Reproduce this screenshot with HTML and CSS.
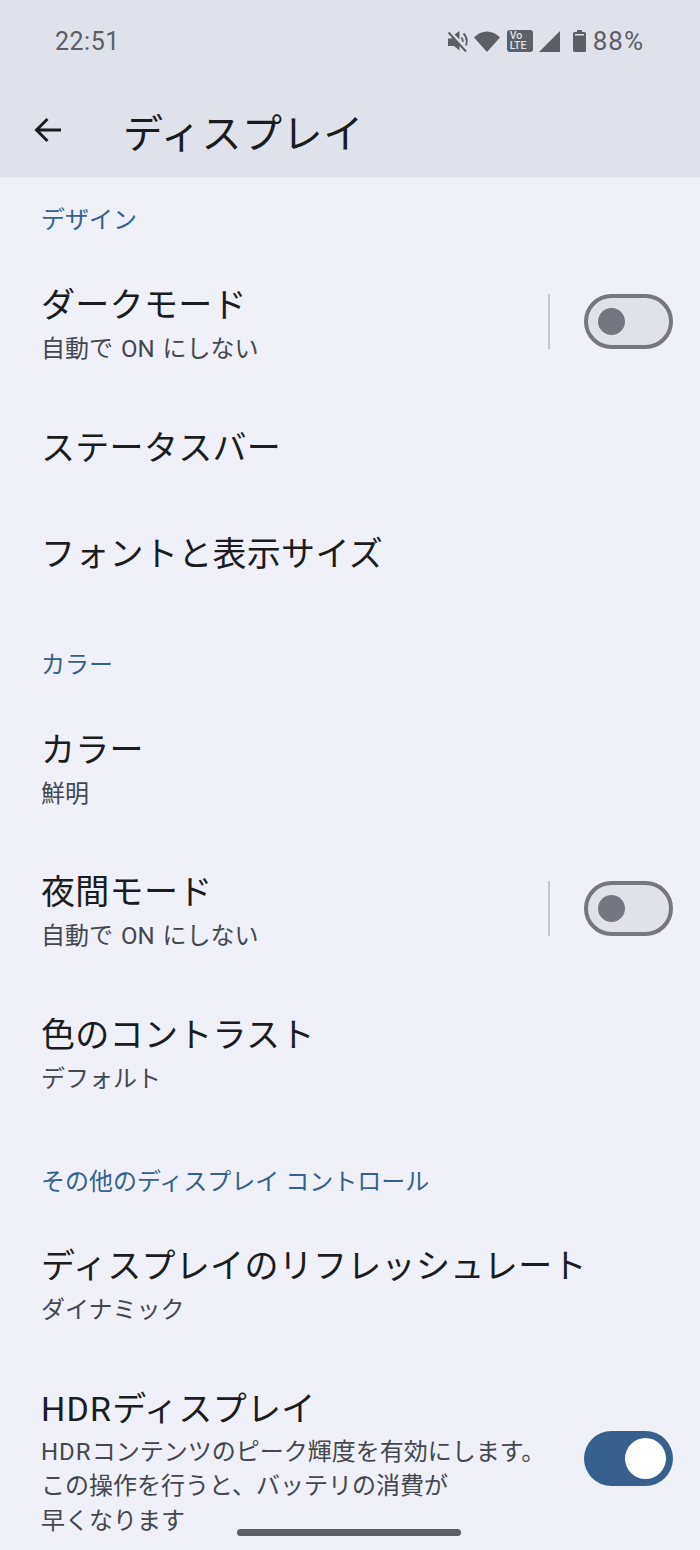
FILE: index.html
```html
<!DOCTYPE html>
<html lang="ja">
<head>
  <meta charset="UTF-8">
  <title>ディスプレイ</title>
  <link rel="stylesheet" href="styles.css">
</head>
<body>
  <header class="top">
    <div class="status">
      <span class="clock">22:51</span>
      <div class="status-icons">
        <svg class="ic-mute" width="21" height="23" viewBox="0 0 21 23">
          <path d="M1 8.500h3.500l1.500-1.500 6.500 7v6.500L7 16H1z" fill="#5c5f66"/>
          <path d="M7.500 4.500L12.500 1v8.500z" fill="#5c5f66"/>
          <path d="M14.500 7.500c1.200 1.500 1.500 3 1.200 4.500M16.500 3.500c3 3 4 7.500 2.500 12" fill="none" stroke="#5c5f66" stroke-width="1.800"/>
          <path d="M1.500 2.500l17.500 19" stroke="#5c5f66" stroke-width="2"/>
          <path d="M3.500 1.500l17 18.500" stroke="#dfe2eb" stroke-width="1"/>
        </svg>
        <svg class="ic-wifi" width="26" height="21" viewBox="0 0 26 21">
          <path d="M0 6.500C3.500 2.500 8.300 0.500 13 0.500s9.500 2 13 6L13 21z" fill="#5c5f66"/>
        </svg>
        <div class="volte"><span>Vo</span><span>LTE</span></div>
        <svg class="ic-signal" width="21" height="21" viewBox="0 0 21 21">
          <path d="M0 21L21 0v21z" fill="#5c5f66"/>
        </svg>
        <svg class="ic-battery" width="13" height="22" viewBox="0 0 13 22">
          <path d="M4 0h5v2h2.500a1.500 1.500 0 0 1 1.500 1.500v17a1.500 1.500 0 0 1-1.500 1.500h-10A1.500 1.500 0 0 1 0 20.500v-17A1.500 1.500 0 0 1 1.500 2H4z" fill="#5c5f66"/>
          <path d="M2 4h9v1.500H2z" fill="#dfe2eb"/>
        </svg>
        <span class="pct">88%</span>
      </div>
    </div>
    <div class="appbar">
      <svg class="back" width="30" height="28" viewBox="0 0 30 28">
        <path d="M28 14H4M14.500 3L3.500 14l11 11" fill="none" stroke="#1a1c20" stroke-width="3"/>
      </svg>
      <h1>ディスプレイ</h1>
    </div>
  </header>

  <main>
    <h2 class="section first">デザイン</h2>
    <div class="row">
      <div class="text">
        <div class="name">ダークモード</div>
        <div class="sub">自動で ON にしない</div>
      </div>
      <div class="divider"></div>
      <div class="toggle"><div class="knob"></div></div>
    </div>
    <div class="row single"><div class="text"><div class="name">ステータスバー</div></div></div>
    <div class="row single"><div class="text"><div class="name">フォントと表示サイズ</div></div></div>

    <h2 class="section">カラー</h2>
    <div class="row">
      <div class="text">
        <div class="name">カラー</div>
        <div class="sub">鮮明</div>
      </div>
    </div>
    <div class="row">
      <div class="text">
        <div class="name">夜間モード</div>
        <div class="sub">自動で ON にしない</div>
      </div>
      <div class="divider"></div>
      <div class="toggle"><div class="knob"></div></div>
    </div>
    <div class="row">
      <div class="text">
        <div class="name">色のコントラスト</div>
        <div class="sub">デフォルト</div>
      </div>
    </div>

    <h2 class="section last">その他のディスプレイ コントロール</h2>
    <div class="row">
      <div class="text">
        <div class="name">ディスプレイのリフレッシュレート</div>
        <div class="sub">ダイナミック</div>
      </div>
    </div>
    <div class="row hdr">
      <div class="text">
        <div class="name"><span class="latin">HDR</span>ディスプレイ</div>
        <div class="sub"><span class="latin">HDR</span>コンテンツのピーク輝度を有効にします。<br>この操作を行うと、バッテリの消費が<br>早くなります</div>
      </div>
      <div class="toggle on"><div class="knob"></div></div>
    </div>
  </main>

  <div class="nav-pill"></div>
</body>
</html>
```

FILE: styles.css
```css
body {
  font-family: Roboto, "Noto Sans CJK JP", sans-serif;
  background-color: #eff0f8;
  color: #1a1c20;
  margin: 0;
  padding: 0;
  height: 1550px;
  overflow: hidden;
  position: relative;
}

/* top area */
.top {
  background-color: #dfe2eb;
  height: 177px;
}
.status {
  height: 82px;
  display: flex;
  justify-content: space-between;
  align-items: center;
  padding: 0 56px 0 55px;
  color: #5c5f66;
}
.clock {
  font-size: 25px;
  letter-spacing: 0.5px;
}
.status-icons {
  display: flex;
  align-items: center;
}
.ic-mute { margin-right: 6px; }
.ic-wifi { margin-right: 7px; }
.ic-signal { margin-left: 6px; }
.ic-battery { margin-left: 13px; }
.volte {
  width: 26px;
  height: 22px;
  box-sizing: border-box;
  padding: 1px 0 0 3px;
  background-color: #5c5f66;
  border-radius: 3px;
  color: #dfe2eb;
  font-size: 10.500px;
  font-weight: 500;
  line-height: 10px;
  display: flex;
  flex-direction: column;
}
.pct {
  font-size: 26px;
  margin-left: 7px;
  letter-spacing: 1px;
}
.appbar {
  display: flex;
  align-items: center;
  height: 95px;
  padding-left: 33px;
}
.back { margin-right: 60px; }
h1 {
  font-size: 40px;
  letter-spacing: 0.600px;
  font-weight: 400;
  margin: 0;
  line-height: 50px;
  margin-top: 10px;
}

/* list */
.section {
  font-size: 24px;
  font-weight: 400;
  color: #36618e;
  line-height: 32px;
  margin: 0;
  padding: 42px 41px 16px;
}
.section.first {
  padding-top: 27px;
  padding-bottom: 16px;
}
.section.last {
  padding-bottom: 15px;
}
.row {
  display: flex;
  align-items: flex-start;
  padding: 31px 27px 23px 41px;
}
.row.single {
  padding-top: 31px;
  padding-bottom: 31px;
}
.text {
  flex: 1;
  min-width: 0;
}
.name {
  font-size: 34px;
  letter-spacing: 0.300px;
  line-height: 44px;
}
.sub {
  font-size: 24px;
  line-height: 34.500px;
  color: #44474e;
  margin: 5px 0;
  word-spacing: 2px;
}
.hdr .sub { margin-top: 4px; }
.name .latin { letter-spacing: 1.200px; }
.sub .latin { letter-spacing: 1px; }

/* switches */
.divider {
  width: 2px;
  height: 55px;
  background-color: #c6c8cf;
  margin: 11px 34px 0 0;
}
.toggle {
  width: 89px;
  height: 55px;
  box-sizing: border-box;
  border: 4px solid #74777f;
  border-radius: 28px;
  background-color: #e1e2e7;
  margin-top: 11px;
  display: flex;
  align-items: center;
  padding-left: 10px;
}
.knob {
  width: 27px;
  height: 27px;
  border-radius: 50%;
  background-color: #74777f;
}
.toggle.on {
  background-color: #36618e;
  border: none;
  justify-content: flex-end;
  padding: 0 7px 0 0;
  margin-top: 44px;
}
.toggle.on .knob {
  width: 41px;
  height: 41px;
  background-color: #ffffff;
}

.nav-pill {
  position: absolute;
  left: 237px;
  top: 1529px;
  width: 224px;
  height: 7px;
  border-radius: 4px;
  background-color: #5e6065;
}
```
